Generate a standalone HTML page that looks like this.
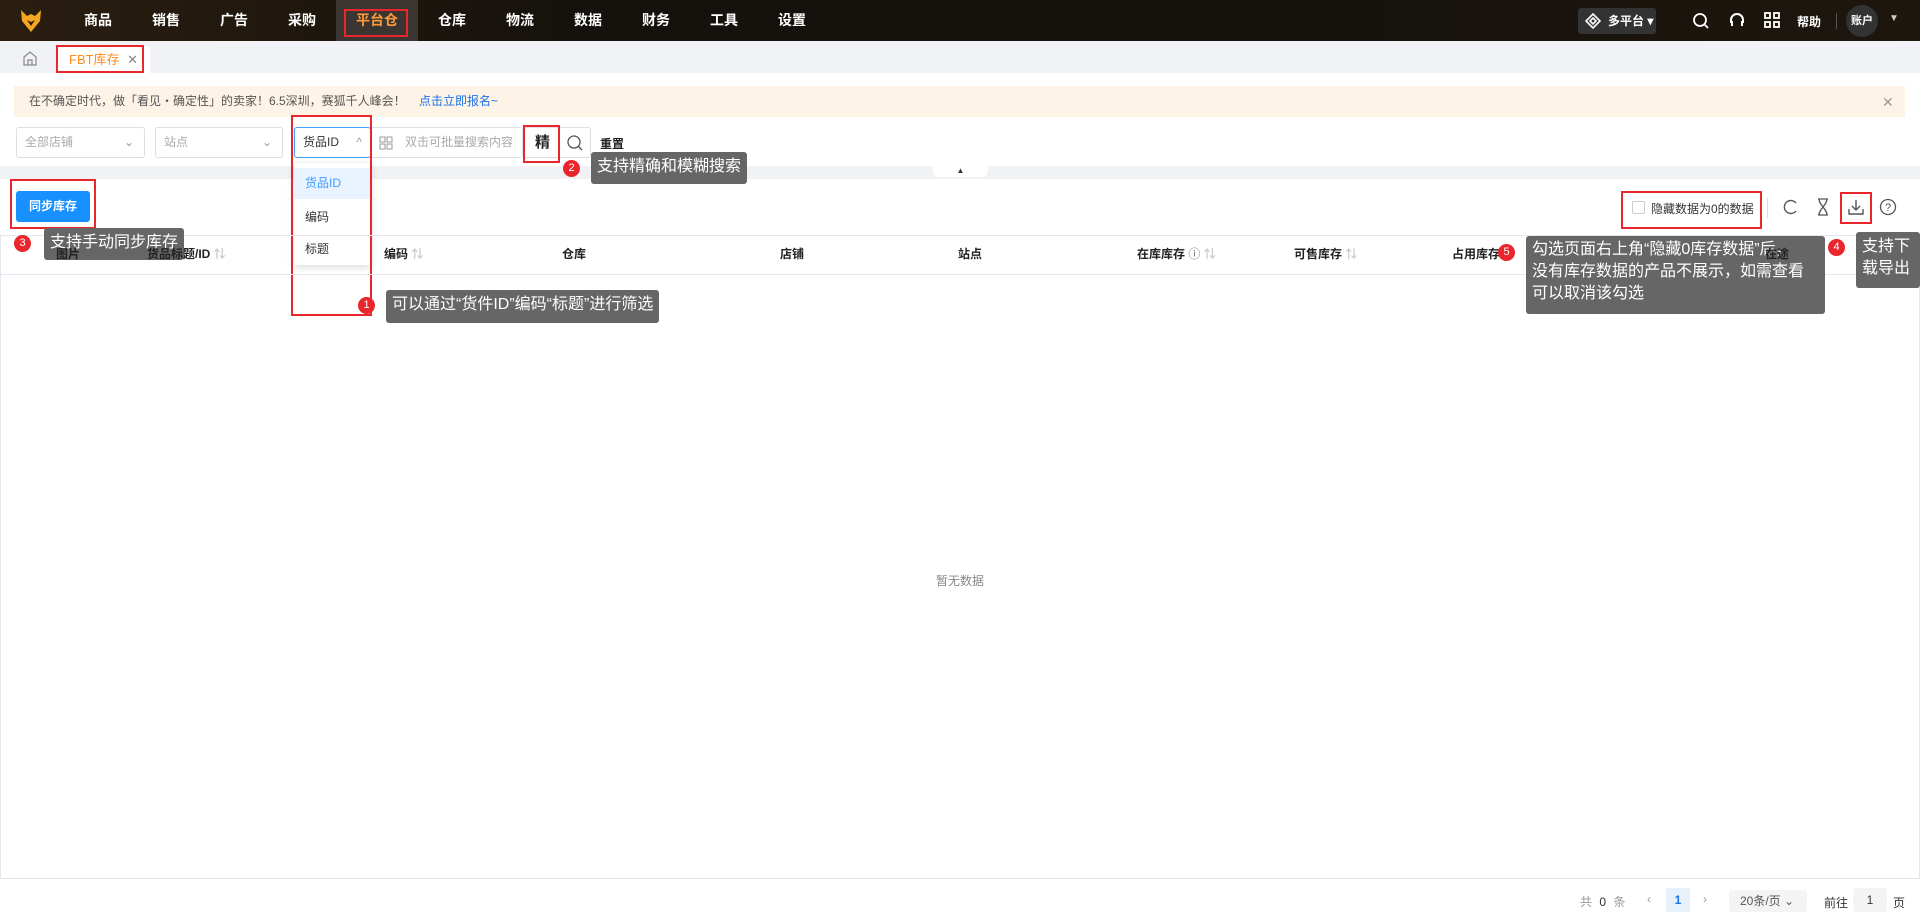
<!DOCTYPE html><html><head><meta charset="utf-8"><style>
*{margin:0;padding:0;box-sizing:border-box}
body{width:1920px;height:919px;position:relative;overflow:hidden;background:#fff;font-family:"Liberation Sans","Noto Sans CJK SC",sans-serif;font-size:12px;color:#333}
.a{position:absolute}
.nav{left:0;top:0;width:1920px;height:41px;background:linear-gradient(90deg,#2a1e10,#15110c 30%,#15110c 70%,#1e170e)}
.m{top:0;height:41px;line-height:41px;color:#fff;font-size:14px;font-weight:bold}
.rb{border:2px solid #e8262b}
.tip{background:#666;color:#fff;font-size:16px;border-radius:3px;padding:4px 6px;line-height:22px}
.dot{width:17px;height:17px;border-radius:50%;background:#e8262b;color:#fff;font-size:11px;text-align:center;line-height:17px}
.sel{border:1px solid #dcdfe6;border-radius:3px;height:31px;top:127px;color:#aaa;line-height:29px;padding-left:8px}
.th{top:235px;height:39px;line-height:39px;font-weight:bold;color:#222;z-index:3}
</style></head><body>
<div class="a nav"></div>
<svg class="a" style="left:20px;top:9px" width="22" height="24" viewBox="0 0 22 24"><path d="M1 1 L7 7 L11 5 L15 7 L21 1 L20 12 L11 23 L2 12Z" fill="#f5a623"/><path d="M7 11 L11 17 L15 11 L11 13Z" fill="#2a1e10"/></svg>
<div class="a m" style="left:84px">商品</div><div class="a m" style="left:152px">销售</div><div class="a m" style="left:220px">广告</div><div class="a m" style="left:288px">采购</div>
<div class="a" style="left:336px;top:0;width:82px;height:41px;background:#3a3530"></div>
<div class="a m" style="left:356px;color:#ff9a3c">平台仓</div>
<div class="a m" style="left:438px">仓库</div><div class="a m" style="left:506px">物流</div><div class="a m" style="left:574px">数据</div><div class="a m" style="left:642px">财务</div><div class="a m" style="left:710px">工具</div><div class="a m" style="left:778px">设置</div>
<div class="a rb" style="left:344px;top:9px;width:64px;height:28px"></div>
<div class="a" style="left:1578px;top:8px;width:78px;height:26px;background:#333;border-radius:3px;color:#fff;font-size:12px;font-weight:bold;line-height:26px;padding-left:30px">多平台 ▾</div>
<svg class="a" style="left:1585px;top:13px" width="16" height="16"><path d="M8 1L15 8 8 15 1 8Z M8 5L11 8 8 11 5 8Z" fill="none" stroke="#fff" stroke-width="1.6"/></svg>
<svg class="a" style="left:1692px;top:12px" width="18" height="18"><circle cx="8" cy="8" r="6" fill="none" stroke="#fff" stroke-width="1.8"/><path d="M12.5 12.5L16 16" stroke="#fff" stroke-width="1.8"/></svg>
<svg class="a" style="left:1728px;top:11px" width="18" height="20"><path d="M3 12V9a6 6 0 0112 0v3M4 10v5M14 10v5" fill="none" stroke="#fff" stroke-width="2"/></svg>
<svg class="a" style="left:1764px;top:12px" width="16" height="16" fill="none" stroke="#fff" stroke-width="1.8"><rect x="1" y="1" width="5" height="5"/><rect x="10" y="1" width="5" height="5"/><rect x="1" y="10" width="5" height="5"/><rect x="10" y="10" width="5" height="5"/></svg>
<div class="a" style="left:1797px;top:13px;color:#fff;font-size:12px;font-weight:bold">帮助</div>
<div class="a" style="left:1836px;top:13px;width:1px;height:16px;background:#555"></div>
<div class="a" style="left:1846px;top:5px;width:32px;height:32px;border-radius:50%;background:#333;color:#fff;font-size:11px;font-weight:bold;line-height:32px;text-align:center">账户</div>
<div class="a" style="left:1889px;top:13px;color:#ccc;font-size:10px">▼</div>
<div class="a" style="left:0;top:41px;width:1920px;height:32px;background:#f0f2f5"></div>
<svg class="a" style="left:23px;top:51px" width="14" height="15"><path d="M1 6L7 1 13 6V14H1Z M5 14V9H9V14" fill="none" stroke="#888" stroke-width="1.2"/></svg>
<div class="a" style="left:58px;top:46px;width:92px;height:27px;background:#fff;border-radius:3px 3px 0 0;color:#ff8a1f;font-size:13px;line-height:27px;padding-left:11px">FBT库存 <span style="color:#888;margin-left:4px">✕</span></div>
<div class="a rb" style="left:56px;top:45px;width:88px;height:28px"></div>
<div class="a" style="left:14px;top:86px;width:1891px;height:31px;background:#fdf3e6;line-height:31px;padding-left:15px;color:#555">在不确定时代，做「看见・确定性」的卖家！6.5深圳，赛狐千人峰会！ <span style="color:#1a73e8;margin-left:10px">点击立即报名~</span></div>
<div class="a" style="left:1882px;top:94px;color:#999;font-size:14px">✕</div>
<div class="a sel" style="left:16px;width:129px">全部店铺<span style="position:absolute;right:10px;color:#999">⌄</span></div>
<div class="a sel" style="left:155px;width:128px">站点<span style="position:absolute;right:10px;color:#999">⌄</span></div>
<div class="a sel" style="left:294px;width:77px;color:#333;border-color:#409eff">货品ID<span style="position:absolute;right:8px;color:#999">^</span></div>
<div class="a sel" style="left:370px;width:152px;border-left:none;border-right:none;padding-left:35px">双击可批量搜索内容</div>
<svg class="a" style="left:379px;top:136px" width="14" height="14" fill="none" stroke="#999"><rect x="1" y="1" width="5" height="5"/><rect x="8" y="1" width="5" height="5"/><rect x="1" y="8" width="5" height="5"/><rect x="8" y="8" width="5" height="5"/></svg>
<div class="a sel" style="left:522px;width:69px;color:#222;font-size:15px;font-weight:bold;padding-left:12px">精</div>
<svg class="a" style="left:566px;top:134px" width="18" height="18"><circle cx="8" cy="8" r="6" fill="none" stroke="#555" stroke-width="1.3"/><path d="M12 12L16 16" stroke="#555" stroke-width="1.3"/></svg>
<div class="a" style="left:600px;top:135px;font-weight:bold;color:#222">重置</div>
<div class="a" style="left:0;top:166px;width:1920px;height:13px;background:#f0f2f5"></div>
<div class="a" style="left:933px;top:164px;width:55px;height:13px;background:#fff;border-radius:0 0 6px 6px;text-align:center;font-size:8px;color:#334;line-height:13px">▲</div>
<div class="a" style="left:294px;top:163px;width:77px;height:102px;background:#fff;box-shadow:0 2px 8px rgba(0,0,0,.15)"></div>
<div class="a" style="left:294px;top:168px;width:77px;height:31px;background:#e8f3ff;color:#409eff;line-height:31px;padding-left:11px">货品ID</div>
<div class="a" style="left:305px;top:208px">编码</div><div class="a" style="left:305px;top:240px">标题</div>
<div class="a rb" style="left:291px;top:115px;width:81px;height:201px"></div>
<div class="a rb" style="left:523px;top:125px;width:37px;height:38px"></div>
<div class="a" style="left:16px;top:191px;width:74px;height:31px;background:#1890ff;border-radius:3px;color:#fff;line-height:31px;text-align:center;font-weight:bold">同步库存</div>
<div class="a rb" style="left:10px;top:179px;width:86px;height:50px"></div>
<div class="a" style="left:0;top:235px;width:1920px;height:644px;border:1px solid #e4e7ed"></div>
<div class="a" style="left:0;top:274px;width:1920px;height:1px;background:#e4e7ed"></div>
<div class="a th" style="left:56px">图片</div><div class="a th" style="left:147px">货品标题/ID <span style="color:#ccc">⇅</span></div><div class="a th" style="left:384px">编码 <span style="color:#ccc">⇅</span></div><div class="a th" style="left:562px">仓库</div><div class="a th" style="left:780px">店铺</div><div class="a th" style="left:958px">站点</div><div class="a th" style="left:1137px">在库库存 <span style="font-weight:normal;color:#666">ⓘ</span> <span style="color:#ccc">⇅</span></div><div class="a th" style="left:1294px">可售库存 <span style="color:#ccc">⇅</span></div><div class="a th" style="left:1452px">占用库存</div><div class="a th" style="left:1765px">在途</div>
<div class="a" style="left:936px;top:572px;color:#888">暂无数据</div>
<div class="a rb" style="left:1621px;top:191px;width:141px;height:38px"></div>
<div class="a" style="left:1632px;top:201px;width:13px;height:13px;border:1px solid #ccc;border-radius:2px"></div>
<div class="a" style="left:1651px;top:200px">隐藏数据为0的数据</div>
<div class="a" style="left:1767px;top:198px;width:1px;height:20px;background:#ddd"></div>
<svg class="a" style="left:1782px;top:198px" width="18" height="18"><path d="M14 5A6.5 6.5 0 1 0 14 13" fill="none" stroke="#555" stroke-width="1.4"/></svg>
<svg class="a" style="left:1816px;top:198px" width="14" height="18"><path d="M2 1H12M2 17H12M3 1C3 7 11 11 11 17M11 1C11 7 3 11 3 17" fill="none" stroke="#555" stroke-width="1.3"/></svg>
<svg class="a" style="left:1847px;top:198px" width="18" height="18"><path d="M9 2V12M5 8L9 12 13 8M2 11V16H16V11" fill="none" stroke="#555" stroke-width="1.4"/></svg>
<div class="a rb" style="left:1840px;top:192px;width:32px;height:32px"></div>
<svg class="a" style="left:1879px;top:198px" width="18" height="18"><circle cx="9" cy="9" r="7.5" fill="none" stroke="#555" stroke-width="1.3"/><text x="9" y="13" font-size="11" text-anchor="middle" fill="#555" font-family="Liberation Sans">?</text></svg>
<div class="a dot" style="left:563px;top:160px">2</div><div class="a tip" style="left:591px;top:152px;height:32px">支持精确和模糊搜索</div>
<div class="a dot" style="left:14px;top:235px">3</div><div class="a tip" style="left:44px;top:228px;height:32px">支持手动同步库存</div>
<div class="a dot" style="left:358px;top:297px">1</div><div class="a tip" style="left:386px;top:290px;height:33px">可以通过“货件ID”编码“标题”进行筛选</div>
<div class="a dot" style="left:1498px;top:244px;z-index:4">5</div><div class="a tip" style="left:1526px;top:236px;width:299px;height:78px;line-height:22px;padding-top:3px">勾选页面右上角“隐藏0库存数据”后，<br>没有库存数据的产品不展示，如需查看<br>可以取消该勾选</div>
<div class="a dot" style="left:1828px;top:239px">4</div><div class="a tip" style="left:1856px;top:232px;width:64px;height:56px;line-height:22px">支持下<br>载导出</div>
<div class="a" style="left:1580px;top:893px;color:#999">共 <span style="color:#333;margin:0 4px">0</span> 条</div>
<div class="a" style="left:1647px;top:892px;color:#999">‹</div>
<div class="a" style="left:1666px;top:888px;width:24px;height:24px;background:#e6f1fc;color:#1a73e8;text-align:center;line-height:24px;font-weight:bold">1</div>
<div class="a" style="left:1703px;top:892px;color:#999">›</div>
<div class="a" style="left:1729px;top:890px;width:78px;height:22px;background:#f4f4f5;border-radius:3px;line-height:22px;padding-left:11px;color:#555">20条/页 ⌄</div>
<div class="a" style="left:1824px;top:894px">前往</div>
<div class="a" style="left:1853px;top:888px;width:34px;height:24px;background:#f4f4f5;border-radius:3px;text-align:center;line-height:24px">1</div>
<div class="a" style="left:1893px;top:894px">页</div>
</body></html>
